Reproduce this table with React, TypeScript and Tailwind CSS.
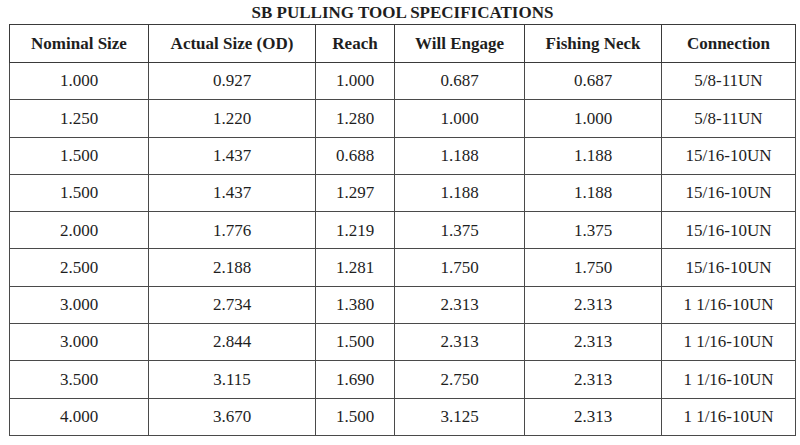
const headers = [
  "Nominal Size",
  "Actual Size (OD)",
  "Reach",
  "Will Engage",
  "Fishing Neck",
  "Connection",
];

const rows: string[][] = [
  ["1.000", "0.927", "1.000", "0.687", "0.687", "5/8-11UN"],
  ["1.250", "1.220", "1.280", "1.000", "1.000", "5/8-11UN"],
  ["1.500", "1.437", "0.688", "1.188", "1.188", "15/16-10UN"],
  ["1.500", "1.437", "1.297", "1.188", "1.188", "15/16-10UN"],
  ["2.000", "1.776", "1.219", "1.375", "1.375", "15/16-10UN"],
  ["2.500", "2.188", "1.281", "1.750", "1.750", "15/16-10UN"],
  ["3.000", "2.734", "1.380", "2.313", "2.313", "1 1/16-10UN"],
  ["3.000", "2.844", "1.500", "2.313", "2.313", "1 1/16-10UN"],
  ["3.500", "3.115", "1.690", "2.750", "2.313", "1 1/16-10UN"],
  ["4.000", "3.670", "1.500", "3.125", "2.313", "1 1/16-10UN"],
];

export default function App() {
  return (
    <div className="w-[800px] h-[445px] bg-white text-[#1e1e1e] font-['Liberation_Serif','Times_New_Roman',serif] overflow-hidden">
      <h1 className="h-[24px] flex items-center justify-center pl-[5px] text-[17px] font-bold leading-none">
        SB PULLING TOOL SPECIFICATIONS
      </h1>
      <table className="ml-[9px] w-[786px] table-fixed border-collapse border border-[#2e2e2e] text-[17px]">
        <colgroup>
          <col className="w-[139px]" />
          <col className="w-[167px]" />
          <col className="w-[79px]" />
          <col className="w-[130px]" />
          <col className="w-[137px]" />
          <col className="w-[134px]" />
        </colgroup>
        <thead>
          <tr className="h-[38px]">
            {headers.map((h) => (
              <th
                key={h}
                className="border border-[#3a3a3a] font-bold text-center align-middle p-0"
              >
                {h}
              </th>
            ))}
          </tr>
        </thead>
        <tbody>
          {rows.map((r, i) => (
            <tr key={i} className="h-[37.3px]">
              {r.map((c, j) => (
                <td
                  key={j}
                  className="border border-[#4a4a4a] text-center align-middle p-0 font-normal"
                >
                  {c}
                </td>
              ))}
            </tr>
          ))}
        </tbody>
      </table>
    </div>
  );
}
